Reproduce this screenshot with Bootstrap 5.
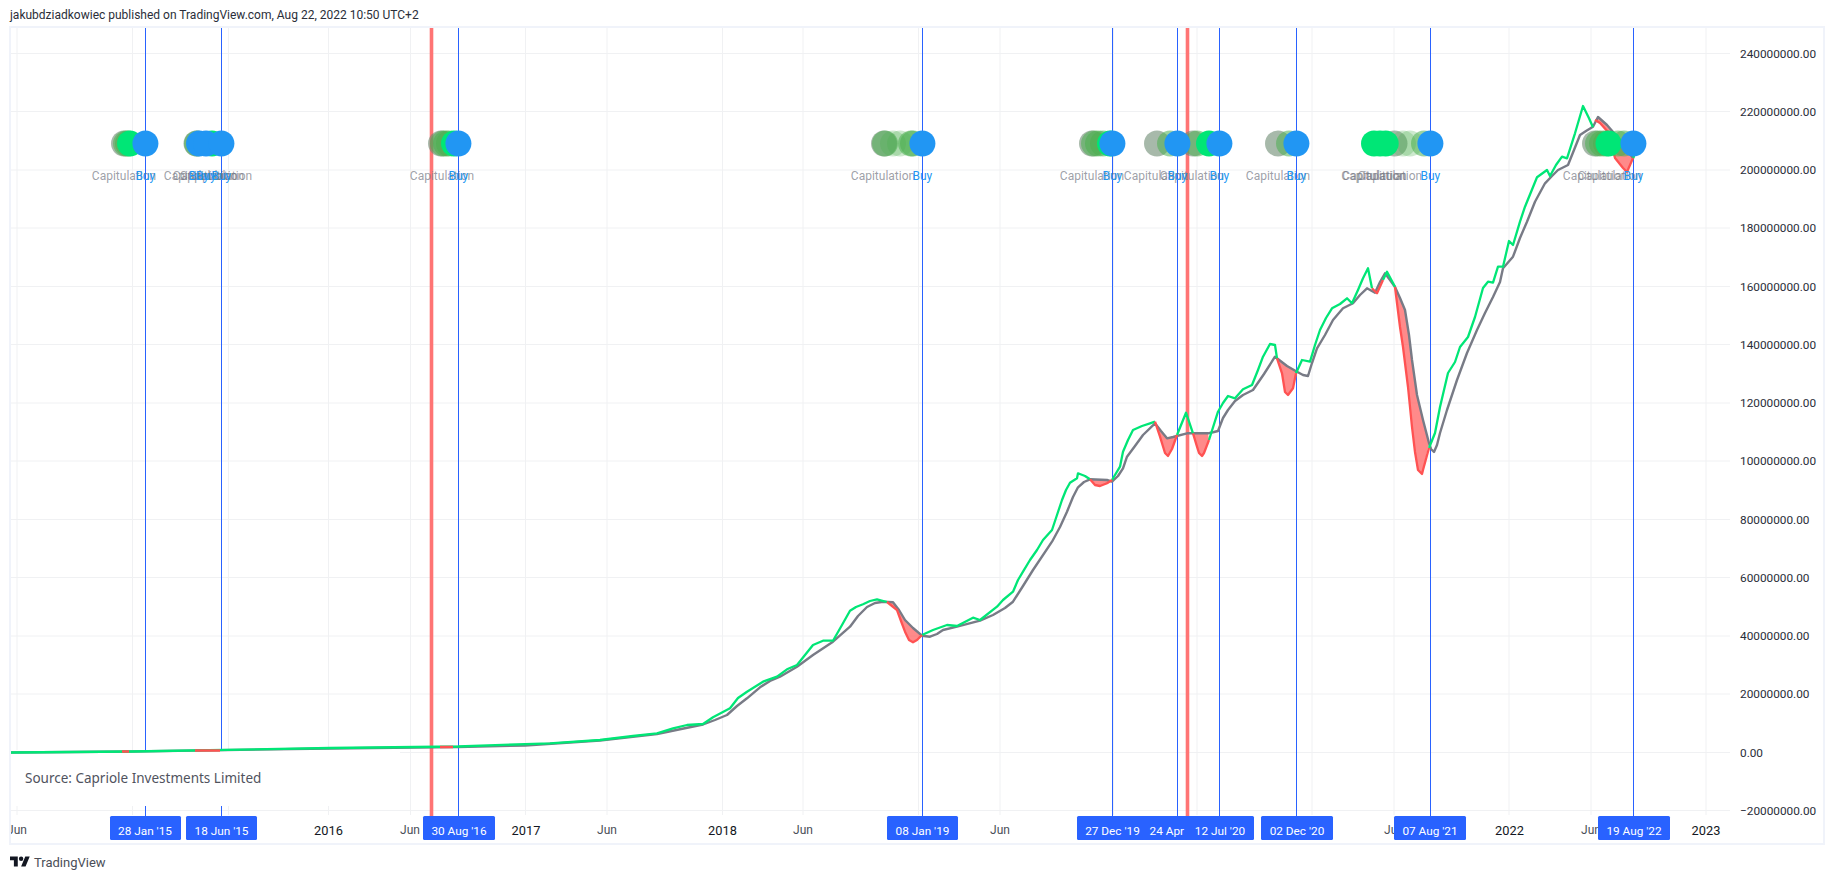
<!DOCTYPE html>
<html lang="en">
<head>
<meta charset="utf-8">
<title>TradingView chart</title>
<link href="https://cdn.jsdelivr.net/npm/bootstrap@5.3.0/dist/css/bootstrap.min.css" rel="stylesheet">
<style>
body{background:#fff;height:879px;overflow:hidden}
.pub-line{height:26px;padding-left:10px;font:12px/30px Roboto,sans-serif;color:#2a2e39}
.chart-frame{margin-left:9px;width:1816px;height:819px;border:2px solid #f0f3fa}
.chart-svg{display:block;width:1812px;height:815px}
.brand-row{height:34px;padding-left:10px;font:13px Roboto,sans-serif;color:#4a4e57}
.grid{stroke:#f0f1f3;stroke-width:1;fill:none}
.vl{stroke:#2962ff;stroke-width:1}
.rl{stroke:#ff7474;stroke-width:3.6}
.sg{fill:none;stroke:#787b86;stroke-width:2.4;stroke-linejoin:round}
.sn{fill:none;stroke:#00e676;stroke-width:2.3;stroke-linejoin:round}
.sr{fill:none;stroke:#ff5252;stroke-width:2.3;stroke-linejoin:round}
.rf{fill:#ff5252;fill-opacity:.68}
.b-mut{fill:#6d8a72;fill-opacity:.6}
.b-grn{fill:#4caf50;fill-opacity:.55}
.b-lt{fill:#4caf50;fill-opacity:.28}
.b-sol{fill:#00e676}
.b-blu{fill:#2196f3}
.t{font-family:Roboto,sans-serif;font-size:12px;dominant-baseline:central}
.cap{fill:#787b86;fill-opacity:.72;text-anchor:middle}
.buy{fill:#2196f3;text-anchor:middle}
.px{fill:#2a2e39;font-size:11.8px}
.tk{fill:#4a4e57;text-anchor:middle;font-size:12px}
.yr{fill:#131722;text-anchor:middle;font-size:12.8px}
.dt-box{fill:#2962ff}
.dt-txt{fill:#fff;text-anchor:middle;font-size:11.8px}
.src{fill:#50535e;font-family:"Noto Sans",sans-serif;font-size:13.5px}
.tv-mark{width:20px;height:16px;fill:#131722}
</style>
</head>
<body class="m-0">
<div class="pub-line text-nowrap">jakubdziadkowiec published on TradingView.com, Aug 22, 2022 10:50 UTC+2</div>
<div class="chart-frame">
<svg class="chart-svg" viewBox="11 28 1812 815" xmlns="http://www.w3.org/2000/svg">
  <path class="grid" d="M17 27V815M132.5 27V815M228.5 27V815M328.5 27V815M410.5 27V815M525.5 27V815M607 27V815M722.5 27V815M803 27V815M918.5 27V815M1000 27V815M1113.5 27V815M1197 27V815M1312 27V815M1394 27V815M1509 27V815M1591 27V815M1706 27V815"/>
  <path class="grid" d="M10 53.5H1730M10 111.5H1730M10 170H1730M10 228H1730M10 286.5H1730M10 344.5H1730M10 403H1730M10 461H1730M10 519.5H1730M10 577.5H1730M10 636H1730M10 694H1730M10 752.5H1730M10 810.5H1730"/>

  <path class="vl" d="M145.5 27V816M221.5 27V816"/>
  <rect x="10" y="750" width="390" height="56" fill="#fff"/>
  <path class="vl" d="M458.5 27V816M922.5 27V816M1112.5 27V816M1177.5 27V816M1219.5 27V816M1296.5 27V816M1430.5 27V816M1633.5 27V816"/>
  <path class="rl" d="M431.5 27V816M1187.5 27V816"/>

  <text class="t src" x="25" y="778">Source: Capriole Investments Limited</text>

  <path class="rf" d="M887 602L893 602.3 905 620 922 635.7 917 640 913 642.3 909 640 905 632 897 610Z"/>
  <path class="rf" d="M1092 480L1107 480 1112 481 1107 484 1100 486 1095 485Z"/>
  <path class="rf" d="M1155 422L1167 438.3 1177 435 1172 449 1168 456 1165 453 1160 437Z"/>
  <path class="rf" d="M1193 433.3L1208 433.3 1209 440 1204 453 1202 456 1199 453 1197 447Z"/>
  <path class="rf" d="M1277 358L1297 372 1293 388 1288 395 1285 392 1282 373Z"/>
  <path class="rf" d="M1372 290L1375 292.7 1383 280 1377 293Z"/>
  <path class="rf" d="M1395 287L1405 310 1412 360 1417 395 1423 420 1429 443 1423 470 1422 474 1418 470 1415 452 1412 427 1408 387 1403 347 1400 327Z"/>
  <path class="rf" d="M1595 120L1598 117 1607 125 1620 140 1633 158 1630 165 1627 172 1623 168 1615 158 1608 132 1600 123Z"/>

  <polyline class="sg" points="10,752.5 132,751.5 330,748.5 458,747 525,745.5 600,740.5 657,734 703,724.5 715,720 727,715 737,706 747,698.3 760,687.3 770,681 780,676.7 797,666.7 813,655 833,641.7 850,626.7 858,616 867,607 875,603 883,601.7 893,602.3 899,610 905,620 913,628 922,635.7 930,636.7 937,634 943,630 957,626.7 980,620.7 993,615 1005,608 1013,601.7 1023,586 1033,570 1052,541.7 1060,527 1067,511.7 1073,497 1078,487.3 1084,482 1090,479.3 1107,480 1112,481.7 1118,476 1123,468.3 1127,456.7 1135,446 1143,435 1155,423.3 1161,431 1167,438.3 1173,437 1187,433.3 1208,433.3 1214,432 1218,431 1223,418 1228,410 1235,401 1243,395 1253,390 1264,374 1275,356.7 1287,366 1297,371.7 1303,375 1308,376 1312,363 1317,348.3 1325,335 1333,320 1343,308.3 1353,303.3 1360,295 1367,288.3 1375,292.7 1380,282 1385,273.3 1390,280 1395,287 1400,298 1405,310 1409,335 1412,360 1417,395 1423,420 1429,443 1431,449 1434,452 1437,445 1440,433 1447,410 1457,380 1467,353 1477,330 1485,313 1493,297 1500,282 1503,268.3 1513,256.7 1520,238 1527,221.7 1535,201.7 1545,183.3 1552,176 1558,170 1568,165 1574,150 1580,135 1586,131 1593,126.7 1598,117 1607,125 1620,140 1633,158 1636,150"/>

  <path class="sn" d="M10 752.5L132 751.5 330 748 458 746.5 550 743.3 600 740 633 736 657 733.3 673 728.3 687 725 703 724 713 717.3 730 708.3 738 698 747 691.7 763 681.7 777 676.7 787 669.3 797 665 805 655 813 645 823 640.7 833 640.7 842 625 850 610.7 856 607 863 604.3 870 601 877 599.3 887 602M922 635L933 630 947 625 957 626 973 617.7 980 620 997 606.7 1003 600 1013 591.7 1018 580 1023 571.7 1030 560 1037 550 1043 540 1052 530 1057 515 1062 500 1066 490 1070 482.7 1077 478.3 1078 473.3 1085 476 1090 479.3M1112 480L1120 466.7 1123 451.7 1128 440 1133 430 1142 426 1150 423.3 1155 421.7M1177 435L1186 412.7 1193 433.3M1209 440L1218 411.7 1223 403 1228 396 1235 398.3 1243 389.3 1252 385 1258 370 1263 356.7 1270 344 1275 345 1277 358.3M1296 373.3L1302 360 1310 361.7 1315 345 1320 330 1326 318 1332 308.3 1340 304 1347 298.3 1352 303.3 1358 290 1363 278.3 1368 268.3 1372 288.3M1383 280L1387 271.7 1395 286.7M1429 448L1435 433 1440 407 1448 373 1455 362 1460 347 1468 337 1475 317 1483 288 1488 281.7 1493 282.7 1498 266.7 1503 266.7 1509 241 1513 245 1520 221.7 1525 206.7 1531 192 1537 177.3 1547 170 1550 176 1556 165 1562 156.7 1567 158.3 1575 133.3 1583 106 1589 118.3 1593 127.3M1633 158.3L1636 150"/>
  <path class="sr" d="M887 602L897 610 901 621 905 631.7 909 640 913 642.3 917 640 922 635M1090 479.3L1095 485 1100 486 1107 483.3 1112 480M1155 421.7L1160 436.7 1165 453 1168 456 1172 449 1177 435M1193 433.3L1197 446.7 1199 453 1202 456 1204 453 1209 440M1277 358.3L1282 373.3 1285 392 1288 395 1293 388.3 1296 373.3M1372 288.3L1377 293.3 1383 280M1395 287L1400 327 1403 347 1408 387 1412 427 1415 452 1418 470 1422 474 1423 470 1429 448M1595 120L1600 123 1608 132 1615 158 1623 168 1627 172 1630 165 1633 158M122 751.5H129M195 750.5H220M440 747H453"/>

  <g>
    <circle class="b-mut" cx="124" cy="143.5" r="13"/><circle class="b-grn" cx="126" cy="143.5" r="13"/><circle class="b-grn" cx="128" cy="143.5" r="13"/><circle class="b-sol" cx="130" cy="143.5" r="13"/><circle class="b-blu" cx="145.4" cy="143.5" r="13"/>
    <circle class="b-mut" cx="196.5" cy="143.5" r="13"/><circle class="b-grn" cx="197" cy="143.5" r="13"/><circle class="b-sol" cx="212" cy="143.5" r="13"/><circle class="b-blu" cx="199" cy="143.5" r="13"/><circle class="b-blu" cx="206" cy="143.5" r="13"/><circle class="b-blu" cx="221.4" cy="143.5" r="13"/>
    <circle class="b-mut" cx="441" cy="143.5" r="13"/><circle class="b-grn" cx="443" cy="143.5" r="13"/><circle class="b-grn" cx="446" cy="143.5" r="13"/><circle class="b-grn" cx="449" cy="143.5" r="13"/><circle class="b-sol" cx="454" cy="143.5" r="13"/><circle class="b-blu" cx="458.4" cy="143.5" r="13"/>
    <circle class="b-mut" cx="884" cy="143.5" r="13"/><circle class="b-grn" cx="885" cy="143.5" r="13"/><circle class="b-lt" cx="893" cy="143.5" r="13"/><circle class="b-lt" cx="900" cy="143.5" r="13"/><circle class="b-grn" cx="911" cy="143.5" r="13"/><circle class="b-grn" cx="913" cy="143.5" r="13"/><circle class="b-blu" cx="922.4" cy="143.5" r="13"/>
    <circle class="b-mut" cx="1092" cy="143.5" r="13"/><circle class="b-grn" cx="1094" cy="143.5" r="13"/><circle class="b-grn" cx="1098" cy="143.5" r="13"/><circle class="b-grn" cx="1103" cy="143.5" r="13"/><circle class="b-sol" cx="1110" cy="143.5" r="13"/><circle class="b-blu" cx="1112.4" cy="143.5" r="13"/>
    <circle class="b-mut" cx="1157" cy="143.5" r="13"/><circle class="b-grn" cx="1170" cy="143.5" r="13"/><circle class="b-mut" cx="1193" cy="143.5" r="13"/><circle class="b-grn" cx="1197" cy="143.5" r="13"/><circle class="b-sol" cx="1209" cy="143.5" r="13"/><circle class="b-blu" cx="1177.4" cy="143.5" r="13"/><circle class="b-blu" cx="1219.4" cy="143.5" r="13"/>
    <circle class="b-mut" cx="1278" cy="143.5" r="13"/><circle class="b-grn" cx="1289" cy="143.5" r="13"/><circle class="b-blu" cx="1296.4" cy="143.5" r="13"/>
    <circle class="b-mut" cx="1394.5" cy="143.5" r="13"/><circle class="b-lt" cx="1403" cy="143.5" r="13"/><circle class="b-lt" cx="1410" cy="143.5" r="13"/><circle class="b-grn" cx="1424" cy="143.5" r="13"/><circle class="b-sol" cx="1374" cy="143.5" r="13"/><circle class="b-sol" cx="1380" cy="143.5" r="13"/><circle class="b-sol" cx="1385.7" cy="143.5" r="13"/><circle class="b-blu" cx="1430.4" cy="143.5" r="13"/>
    <circle class="b-mut" cx="1595" cy="143.5" r="13"/><circle class="b-grn" cx="1598" cy="143.5" r="13"/><circle class="b-grn" cx="1602" cy="143.5" r="13"/><circle class="b-grn" cx="1606" cy="143.5" r="13"/><circle class="b-grn" cx="1618" cy="143.5" r="13"/><circle class="b-grn" cx="1624" cy="143.5" r="13"/><circle class="b-sol" cx="1608.5" cy="143.5" r="13"/><circle class="b-blu" cx="1633.4" cy="143.5" r="13"/>
  </g>

  <g>
    <text class="t cap" x="124" y="176">Capitulation</text>
    <text class="t cap" x="196" y="176">Capitulation</text><text class="t cap" x="205" y="176">Capitulation</text><text class="t cap" x="212" y="176">Capitulation</text><text class="t cap" x="220" y="176">Capitulation</text>
    <text class="t cap" x="442" y="176">Capitulation</text>
    <text class="t cap" x="883" y="176">Capitulation</text>
    <text class="t cap" x="1092" y="176">Capitulation</text>
    <text class="t cap" x="1156" y="176">Capitulation</text><text class="t cap" x="1192" y="176">Capitulation</text>
    <text class="t cap" x="1278" y="176">Capitulation</text>
    <text class="t cap" x="1373.5" y="176">Capitulation</text><text class="t cap" x="1374.5" y="176">Capitulation</text><text class="t cap" x="1390" y="176">Capitulation</text>
    <text class="t cap" x="1595" y="176">Capitulation</text><text class="t cap" x="1610" y="176">Capitulation</text>
    <text class="t buy" x="145.4" y="176">Buy</text><text class="t buy" x="199" y="176">Buy</text><text class="t buy" x="206" y="176">Buy</text><text class="t buy" x="221.4" y="176">Buy</text><text class="t buy" x="458.4" y="176">Buy</text><text class="t buy" x="922.4" y="176">Buy</text><text class="t buy" x="1112.4" y="176">Buy</text><text class="t buy" x="1177.4" y="176">Buy</text><text class="t buy" x="1219.4" y="176">Buy</text><text class="t buy" x="1296.4" y="176">Buy</text><text class="t buy" x="1430.4" y="176">Buy</text><text class="t buy" x="1633.4" y="176">Buy</text>
  </g>

  <g>
    <text class="t px" x="1740" y="53.5">240000000.00</text>
    <text class="t px" x="1740" y="111.5">220000000.00</text>
    <text class="t px" x="1740" y="170">200000000.00</text>
    <text class="t px" x="1740" y="228">180000000.00</text>
    <text class="t px" x="1740" y="286.5">160000000.00</text>
    <text class="t px" x="1740" y="344.5">140000000.00</text>
    <text class="t px" x="1740" y="403">120000000.00</text>
    <text class="t px" x="1740" y="461">100000000.00</text>
    <text class="t px" x="1740" y="519.5">80000000.00</text>
    <text class="t px" x="1740" y="577.5">60000000.00</text>
    <text class="t px" x="1740" y="636">40000000.00</text>
    <text class="t px" x="1740" y="694">20000000.00</text>
    <text class="t px" x="1740" y="752.5">0.00</text>
    <text class="t px" x="1740" y="810.5">−20000000.00</text>
  </g>

  <g>
    <text class="t tk" x="17" y="830">Jun</text>
    <text class="t yr" x="328.5" y="830">2016</text>
    <text class="t tk" x="410" y="830">Jun</text>
    <text class="t yr" x="526" y="830">2017</text>
    <text class="t tk" x="607" y="830">Jun</text>
    <text class="t yr" x="722.5" y="830">2018</text>
    <text class="t tk" x="803" y="830">Jun</text>
    <text class="t tk" x="1000" y="830">Jun</text>
    <text class="t tk" x="1394" y="830">Jun</text>
    <text class="t yr" x="1509.5" y="830">2022</text>
    <text class="t tk" x="1591" y="830">Jun</text>
    <text class="t yr" x="1706" y="830">2023</text>
  </g>

  <g>
    <rect class="dt-box" x="110" y="816" width="71" height="24" rx="1.5"/><text class="t dt-txt" x="145" y="830.5">28 Jan '15</text>
    <rect class="dt-box" x="186" y="816" width="71" height="24" rx="1.5"/><text class="t dt-txt" x="221.5" y="830.5">18 Jun '15</text>
    <rect class="dt-box" x="423" y="816" width="72" height="24" rx="1.5"/><text class="t dt-txt" x="459" y="830.5">30 Aug '16</text>
    <rect class="dt-box" x="887" y="816" width="71" height="24" rx="1.5"/><text class="t dt-txt" x="922.5" y="830.5">08 Jan '19</text>
    <rect class="dt-box" x="1077" y="816" width="71" height="24" rx="1.5"/><text class="t dt-txt" x="1112.5" y="830.5">27 Dec '19</text>
    <rect class="dt-box" x="1142" y="816" width="71" height="24" rx="1.5"/><text class="t dt-txt" x="1176" y="830.5">24 Apr '20</text>
    <rect class="dt-box" x="1186" y="816" width="68" height="24" rx="1.5"/><text class="t dt-txt" x="1220" y="830.5">12 Jul '20</text>
    <rect class="dt-box" x="1261" y="816" width="72" height="24" rx="1.5"/><text class="t dt-txt" x="1297" y="830.5">02 Dec '20</text>
    <rect class="dt-box" x="1394" y="816" width="72" height="24" rx="1.5"/><text class="t dt-txt" x="1430" y="830.5">07 Aug '21</text>
    <rect class="dt-box" x="1598" y="816" width="72" height="24" rx="1.5"/><text class="t dt-txt" x="1634" y="830.5">19 Aug '22</text>
  </g>
</svg>
</div>
<div class="brand-row d-flex align-items-center gap-1">
  <svg class="tv-mark" viewBox="0 0 36 28" xmlns="http://www.w3.org/2000/svg"><path d="M14 22H7V11H0V4h14v18zM28 22h-8l7.5-18h8L28 22z"/><circle cx="20" cy="8" r="4"/></svg>
  <span>TradingView</span>
</div>
<script src="https://cdn.jsdelivr.net/npm/bootstrap@5.3.0/dist/js/bootstrap.bundle.min.js"></script>
</body>
</html>
